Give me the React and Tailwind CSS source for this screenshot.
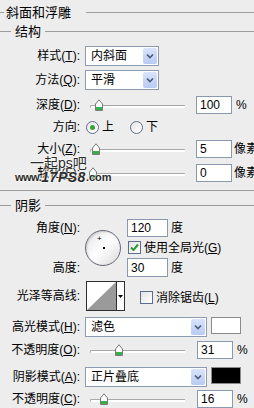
import React from 'react'

const Label = ({ children }) => (
  <div className="w-[80px] shrink-0 text-right whitespace-nowrap">{children}</div>
)

const Key = ({ k }) => <u className="underline-offset-1">{k}</u>

function Select({ value, width }) {
  return (
    <div
      className="ml-[5px] flex h-[20px] items-center justify-between border border-[#8d9bb0] bg-white pl-[5px] pr-[1px]"
      style={{ width }}
    >
      <span className="text-[12px]">{value}</span>
      <div className="flex h-[16px] w-[14px] items-center justify-center rounded-[2px] bg-gradient-to-b from-[#d9e4fb] to-[#b7cbf3]">
        <svg width="8" height="6" viewBox="0 0 8 6">
          <path d="M1 1.5 L4 4.5 L7 1.5" fill="none" stroke="#4b5a7a" strokeWidth="1.6" />
        </svg>
      </div>
    </div>
  )
}

function Slider({ pos }) {
  return (
    <div className="relative ml-[10px] h-[18px] w-[95px] shrink-0">
      <div className="absolute left-0 right-0 top-[9px] h-[3px] rounded-l-full border-t border-l border-[#a8a8a8] bg-white" />
      <svg className="absolute top-[3px]" style={{ left: pos }} width="8" height="12" viewBox="0 0 8 12">
        <path d="M0.5 5 L4 0.8 L7.5 5 V11.5 H0.5 Z" fill="#fbfbfb" stroke="#7a7a7a" />
        <rect x="1" y="8" width="6" height="3" fill="#36b04a" />
      </svg>
    </div>
  )
}

function NumBox({ value, ml = 'ml-[11px]' }) {
  return (
    <div className={`${ml} flex h-[18px] w-[36px] shrink-0 items-center border border-[#8a98ad] bg-white pl-[3px] text-[12px]`}>
      {value}
    </div>
  )
}

function Radio({ checked }) {
  return (
    <div className="flex h-[13px] w-[13px] items-center justify-center rounded-full border border-[#5c6e8e] bg-gradient-to-br from-[#e6e6e6] to-white">
      {checked && <div className="h-[5px] w-[5px] rounded-full bg-[#3aa23a]" />}
    </div>
  )
}

function Check({ checked }) {
  return (
    <div className="flex h-[13px] w-[13px] shrink-0 items-center justify-center border border-[#5c6e8e] bg-gradient-to-br from-[#e4e4e4] to-white">
      {checked && (
        <svg width="9" height="9" viewBox="0 0 9 9">
          <path d="M1 4.5 L3.5 7 L8 1.5" fill="none" stroke="#2f9b2f" strokeWidth="2" />
        </svg>
      )}
    </div>
  )
}

function Group({ title, lead = 'w-[11px]', gap = 'ml-[4px]' }) {
  return (
    <div className="flex h-full items-center">
      <div className={`h-px ${lead} bg-[#9e9e9e]`} />
      <span className={`${gap} text-[13px]`}>{title}</span>
      <div className="ml-[4px] h-px flex-1 bg-[#9e9e9e]" />
    </div>
  )
}

export default function App() {
  return (
    <div className="relative h-[408px] w-[254px] overflow-hidden bg-[#ededed] font-['Liberation_Sans','Noto_Sans_CJK_SC',sans-serif] text-[12px] leading-none text-black">
      {/* title */}
      <div className="flex h-[25px] items-center">
        <div className="h-px w-[4px] bg-[#9e9e9e]" />
        <span className="ml-[2px] text-[13px]">斜面和浮雕</span>
        <div className="ml-[15px] h-px flex-1 bg-[#9e9e9e]" />
      </div>
      <div className="h-[12px]">
        <Group title="结构" />
      </div>

      <div className="mt-[9px] flex h-[20px] items-center">
        <Label>样式(<Key k="T" />):</Label>
        <Select value="内斜面" width={74} />
      </div>
      <div className="mt-[4px] flex h-[20px] items-center">
        <Label>方法(<Key k="Q" />):</Label>
        <Select value="平滑" width={74} />
      </div>

      <div className="mt-[6px] flex h-[18px] items-center">
        <Label>深度(<Key k="D" />):</Label>
        <Slider pos={5} />
        <NumBox value="100" />
        <span className="ml-[4px]">%</span>
      </div>

      <div className="mt-[5px] flex h-[16px] items-center">
        <Label>方向:</Label>
        <div className="ml-[6px] flex items-center">
          <Radio checked />
          <span className="ml-[3px]">上</span>
        </div>
        <div className="ml-[16px] flex items-center">
          <Radio />
          <span className="ml-[3px]">下</span>
        </div>
      </div>

      <div className="mt-[5px] flex h-[18px] items-center">
        <Label>大小(<Key k="Z" />):</Label>
        <Slider pos={2} />
        <NumBox value="5" />
        <span className="ml-[2px] whitespace-nowrap">像素</span>
      </div>

      <div className="mt-[6px] flex h-[18px] items-center">
        <Label>软化(<Key k="F" />):</Label>
        <Slider pos={-1} />
        <NumBox value="0" />
        <span className="ml-[2px] whitespace-nowrap">像素</span>
      </div>

      <div className="mt-[8px] h-px bg-[#9e9e9e]" />

      <div className="h-[28px]">
        <Group title="阴影" />
      </div>

      {/* angle / altitude */}
      <div className="grid grid-cols-[80px_35px_auto] grid-rows-[18px_21px_19px] gap-x-[0px]">
        <div className="col-start-1 row-start-1 flex items-center justify-end">
          角度(<Key k="N" />):
        </div>
        <div className="relative col-start-2 row-span-3 row-start-1 ml-[5px] h-[36px] w-[36px] self-center rounded-full border-[1.5px] border-[#676779] bg-gradient-to-br from-[#e2e2e2] via-white to-[#d8d8d8] shadow-[inset_1px_1px_2px_rgba(0,0,0,0.15)]">
          <span className="absolute left-[11px] top-[4px] text-[8px] leading-none">+</span>
          <div className="absolute left-[17px] top-[16px] h-[2px] w-[2px] bg-black" />
        </div>
        <div className="col-start-3 row-start-1 ml-[12px] flex items-center">
          <div className="flex h-[18px] w-[41px] items-center border border-[#8a98ad] bg-white pl-[3px]">120</div>
          <span className="ml-[3px]">度</span>
        </div>
        <div className="col-start-3 row-start-2 ml-[13px] flex items-center">
          <Check checked />
          <span className="ml-[3px] whitespace-nowrap">
            使用全局光(<Key k="G" />)
          </span>
        </div>
        <div className="col-start-1 row-start-3 flex items-center justify-end">高度:</div>
        <div className="col-start-3 row-start-3 ml-[12px] flex items-center">
          <div className="flex h-[19px] w-[41px] items-center border border-[#8a98ad] bg-white pl-[3px]">30</div>
          <span className="ml-[3px]">度</span>
        </div>
      </div>

      {/* contour */}
      <div className="mt-[4px] flex h-[30px] items-center">
        <Label>光泽等高线:</Label>
        <div className="ml-[6px] flex h-[30px] w-[39px] border border-[#2e2e2e] bg-white">
          <svg width="29" height="28" viewBox="0 0 29 28" className="shrink-0">
            <polygon points="29,0 29,28 0,28" fill="#9a9a9a" />
          </svg>
          <div className="flex flex-1 items-center justify-center border-l border-[#2e2e2e]">
            <svg width="5" height="3" viewBox="0 0 5 3">
              <polygon points="0,0 5,0 2.5,3" fill="#000" />
            </svg>
          </div>
        </div>
        <div className="ml-[15px] flex items-center self-start pt-[10px]">
          <Check />
          <span className="ml-[3px] whitespace-nowrap">
            消除锯齿(<Key k="L" />)
          </span>
        </div>
      </div>

      <div className="mt-[6px] flex h-[20px] items-center">
        <Label>高光模式(<Key k="H" />):</Label>
        <Select value="滤色" width={122} />
        <div className="ml-[4px] h-[17px] w-[30px] self-start border border-[#8a8a8a] bg-white" />
      </div>

      <div className="mt-[4px] flex h-[18px] items-center">
        <Label>不透明度(<Key k="O" />):</Label>
        <Slider pos={25} />
        <NumBox value="31" ml="ml-[12px]" />
        <span className="ml-[4px]">%</span>
      </div>

      <div className="mt-[8px] flex h-[20px] items-center">
        <Label>阴影模式(<Key k="A" />):</Label>
        <Select value="正片叠底" width={122} />
        <div className="ml-[4px] h-[17px] w-[30px] self-start border border-[#8a8a8a] bg-black" />
      </div>

      <div className="mt-[3px] flex h-[18px] items-center">
        <Label>不透明度(<Key k="C" />):</Label>
        <Slider pos={10} />
        <NumBox value="16" ml="ml-[12px]" />
        <span className="ml-[4px]">%</span>
      </div>

      {/* watermark */}
      <div className="pointer-events-none absolute left-[15px] top-[156px] font-bold text-[#2b2b2b] [text-shadow:0_0_2px_#fff,0_0_2px_#fff]">
        <div className="ml-[15px] text-[14px] leading-[15px] font-normal">一起ps吧</div>
        <div className="flex items-end leading-[13px] whitespace-nowrap">
          <span className="text-[11px] tracking-[-0.5px]">www.</span>
          <span className="text-[14px] italic tracking-[0.5px]">17PS8</span>
          <span className="text-[11px]">.com</span>
        </div>
      </div>
    </div>
  )
}
